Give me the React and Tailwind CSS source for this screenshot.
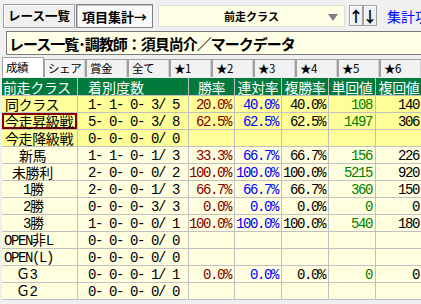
import React from "react";

const jp = "font-['Noto_Sans_CJK_JP',sans-serif]";
const mono = "font-['Liberation_Mono',monospace] text-[14px] tracking-[-1.4px]";

const Half = ({ c }) => <span className={`inline-block w-[7px] text-center ${mono} tracking-normal`}>{c}</span>;

const rows = [
  { label: "同クラス", pl: 3, hi: true, rec: "1- 1- 0- 3/ 5", w: "20.0%", r: "40.0%", f: "40.0%", t: "108", fu: "140" },
  { label: "今走昇級戦", pl: 3, hi: true, sel: true, rec: "5- 0- 0- 3/ 8", w: "62.5%", r: "62.5%", f: "62.5%", t: "1497", fu: "306" },
  { label: "今走降級戦", pl: 3, hi: true, rec: "0- 0- 0- 0/ 0" },
  { label: "新馬", pl: 17, rec: "1- 1- 0- 1/ 3", w: "33.3%", r: "66.7%", f: "66.7%", t: "156", fu: "226" },
  { label: "未勝利", pl: 10, rec: "2- 0- 0- 0/ 2", w: "100.0%", r: "100.0%", f: "100.0%", t: "5215", fu: "920" },
  { label: <><Half c="1" />勝</>, pl: 21, rec: "2- 0- 0- 1/ 3", w: "66.7%", r: "66.7%", f: "66.7%", t: "360", fu: "150" },
  { label: <><Half c="2" />勝</>, pl: 21, rec: "0- 0- 0- 3/ 3", w: "0.0%", r: "0.0%", f: "0.0%", t: "0", fu: "0" },
  { label: <><Half c="3" />勝</>, pl: 21, rec: "1- 0- 0- 0/ 1", w: "100.0%", r: "100.0%", f: "100.0%", t: "540", fu: "180" },
  {
    label: (
      <>
        <span className={mono}>OPEN</span>非<span className={mono}>L</span>
      </>
    ),
    pl: 2,
    rec: "0- 0- 0- 0/ 0",
  },
  { label: <span className={mono}>OPEN(L)</span>, pl: 2, rec: "0- 0- 0- 0/ 0" },
  { label: <>Ｇ<Half c="3" /></>, pl: 14, rec: "0- 0- 0- 1/ 1", w: "0.0%", r: "0.0%", f: "0.0%", t: "0", fu: "0" },
  { label: <>Ｇ<Half c="2" /></>, pl: 14, rec: "0- 0- 0- 0/ 0" },
];

const tabs = ["成績", "シェア", "賞金", "全て", "★1", "★2", "★3", "★4", "★5", "★6"];

function Num({ children, color }) {
  return (
    <div className={`flex h-[16px] items-center justify-end pr-[3px] pt-[2px] ${mono} ${color}`}>
      {children}
    </div>
  );
}

function Row({ row }) {
  const bg = row.hi ? "bg-[#ffff99]" : "bg-[#ffffe0]";
  return (
    <>
      <div
        className={`${bg} ${jp} flex h-[16px] items-center whitespace-nowrap text-[14px] tracking-[-0.4px] leading-none ${
          row.sel ? "border-2 border-[#800000]" : ""
        }`}
        style={{ paddingLeft: row.sel ? row.pl - 2 : row.pl }}
      >
        <span className="leading-none">{row.label}</span>
      </div>
      <div className={`${bg} flex h-[16px] items-center whitespace-pre pl-[10px] pt-[2px] ${mono}`}>{row.rec}</div>
      <div className={bg}><Num color="text-[#800000]">{row.w}</Num></div>
      <div className={bg}><Num color="text-[#0000ff]">{row.r}</Num></div>
      <div className={bg}><Num color="text-black">{row.f}</Num></div>
      <div className={bg}><Num color="text-[#008000]">{row.t}</Num></div>
      <div className={bg}><Num color="text-black">{row.fu}</Num></div>
    </>
  );
}

export default function App() {
  return (
    <div className={`relative h-[304px] w-[421px] overflow-hidden bg-[#f0f0f0] text-black ${jp}`}>
      {/* top toolbar */}
      <div className="mt-[4px] flex h-[24px] items-stretch">
        <div className="ml-[3px] flex w-[72px] shrink-0 items-center justify-center border border-[#a0a0a0] bg-[#f0f0f0] text-[12.5px] font-bold leading-none shadow-[inset_1px_1px_0_#ffffff]">
          レース一覧
        </div>
        <div className="ml-[1px] flex w-[77px] shrink-0 items-center justify-center border border-[#808080] bg-[#f9f9f9] text-[13px] font-bold leading-none shadow-[inset_1px_1px_0_#c8c8c8]">
          項目集計→
        </div>
        <div className="relative ml-[5px] mt-[1px] flex h-[22px] w-[187px] shrink-0 items-center justify-center border border-[#dcdcdc] bg-[#ffffe6]">
          <span className="text-[11px] font-bold leading-none">前走クラス</span>
          <svg className="absolute right-[6px] top-[8px]" width="10" height="7" viewBox="0 0 10 7">
            <polygon points="0,0 10,0 5,7" fill="#808080" />
          </svg>
        </div>
        <div className="ml-[4px] mt-[1px] flex h-[21px] w-[14px] shrink-0 items-center justify-center border border-[#a0a0a0] bg-[#f0f0f0] text-[15px] font-bold leading-none shadow-[inset_1px_1px_0_#ffffff]">
          ↑
        </div>
        <div className="mt-[1px] flex h-[21px] w-[14px] shrink-0 items-center justify-center border border-[#a0a0a0] bg-[#f0f0f0] text-[15px] font-bold leading-none shadow-[inset_1px_1px_0_#ffffff]">
          ↓
        </div>
        <div className="ml-[10px] flex shrink-0 items-center whitespace-nowrap text-[14px] leading-none text-[#0000ff]">
          集計項目
        </div>
      </div>

      {/* title */}
      <div className="ml-[6px] mt-[3px] flex h-[24px] w-[430px] items-center border border-[#7a7a7a] bg-[#ffffe6] pl-[2px] whitespace-nowrap text-[15px] font-bold leading-none tracking-[-1px]">
        レース一覧･調教師：須貝尚介／マークデータ
      </div>

      {/* tabs */}
      <div className="mt-[2px] flex h-[20px] items-end pl-[2px]">
        {tabs.map((t, i) => (
          <div
            key={t}
            className={`flex w-[42px] shrink-0 items-center whitespace-nowrap border border-b-0 border-[#a0a0a0] pl-[3px] text-[11.5px] leading-none tracking-[-0.4px] ${
              i === 0 ? "h-[20px] bg-white" : "h-[18px] bg-[#f2f2f2] shadow-[inset_-1px_0_0_#d0d0d0]"
            }`}
          >
            {t}
          </div>
        ))}
      </div>

      {/* table */}
      <div className="ml-[2px] mt-px grid w-max grid-cols-[75px_110px_45px_46px_46px_46px_46px] gap-px bg-[#c0c0c0] pb-px">
        <div className="flex h-[17px] items-center whitespace-nowrap bg-[#007a3d] pl-[1px] text-[14px] leading-none tracking-[-0.4px] text-white">前走クラス</div>
        <div className="flex h-[17px] items-center bg-[#007a3d] pl-[10px] text-[14px] leading-none text-white">着別度数</div>
        {["勝率", "連対率", "複勝率", "単回値", "複回値"].map((h) => (
          <div key={h} className="flex h-[17px] items-center justify-center whitespace-nowrap bg-[#007a3d] text-[14px] leading-none tracking-[-0.4px] text-white">
            {h}
          </div>
        ))}
        {rows.map((row, i) => (
          <Row key={i} row={row} />
        ))}
      </div>
    </div>
  );
}
